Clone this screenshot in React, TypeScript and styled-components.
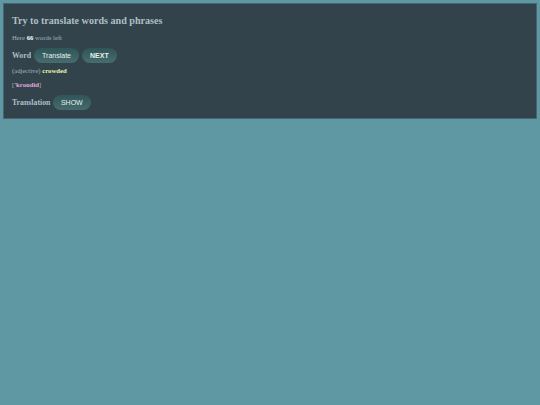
import React from "react";
import styled, { createGlobalStyle } from "styled-components";

const GlobalStyle = createGlobalStyle`
    html, body {
        margin: 0;
        min-height: 100%;
        background: #5f97a3;
    }
    body {
        font-family: "Liberation Serif", serif;
    }
`;

const Page = styled.div`
    padding: 3px;
`;

const Panel = styled.section`
    box-sizing: border-box;
    height: 116px;
    padding: 10px 8px 0;
    background: #33434c;
    border: 1px solid #46666f;
`;

const Title = styled.h1`
    margin: 0 0 7px;
    font-size: 10.1px;
    line-height: 13px;
    font-weight: bold;
    color: #aebfc4;
`;

const Hint = styled.p`
    margin: 0 0 6px;
    font-size: 6.7px;
    line-height: 8px;
    color: #a3b4b9;

    b {
        color: #fff;
    }
`;

const Row = styled.div`
    display: flex;
    align-items: center;
    gap: 2.5px;
`;

const Label = styled.span`
    font-size: 7.8px;
    font-weight: bold;
    color: #aebfc4;
`;

const Pill = styled.button<{ $bold?: boolean }>`
    height: 15px;
    padding: 0 8px;
    border: 0;
    border-radius: 8px;
    background: linear-gradient(#2f5558, #466c6e);
    color: #e8eeee;
    font-family: "Liberation Sans", sans-serif;
    font-size: 7px;
    font-weight: ${p => (p.$bold ? "bold" : "normal")};
`;

const WidePill = styled(Pill)`
    padding: 0 8.5px;
`;

const Line = styled.p`
    margin: 0;
    padding-top: 4px;
    font-size: 6.7px;
    line-height: 8px;
    color: #a3b4b9;
`;

const Phonetics = styled(Line)`
    padding: 6px 0 6px;
`;

const Meaning = styled.b`
    color: #e4f5a8;
`;

const Phonetic = styled.b`
    color: #e0a6d8;
`;

export default function App() {
    return (
        <>
            <GlobalStyle />
            <Page>
                <Panel>
                    <Title>Try to translate words and phrases</Title>
                    <Hint>
                        Here <b>66</b> words left
                    </Hint>
                    <Row>
                        <Label>Word</Label>
                        <WidePill>Translate</WidePill>
                        <Pill $bold>NEXT</Pill>
                    </Row>
                    <Line>
                        (adjective) <Meaning>crowded</Meaning>
                    </Line>
                    <Phonetics>
                        [<Phonetic>'kroudid</Phonetic>]
                    </Phonetics>
                    <Row>
                        <Label>Translation</Label>
                        <Pill>SHOW</Pill>
                    </Row>
                </Panel>
            </Page>
        </>
    );
}
